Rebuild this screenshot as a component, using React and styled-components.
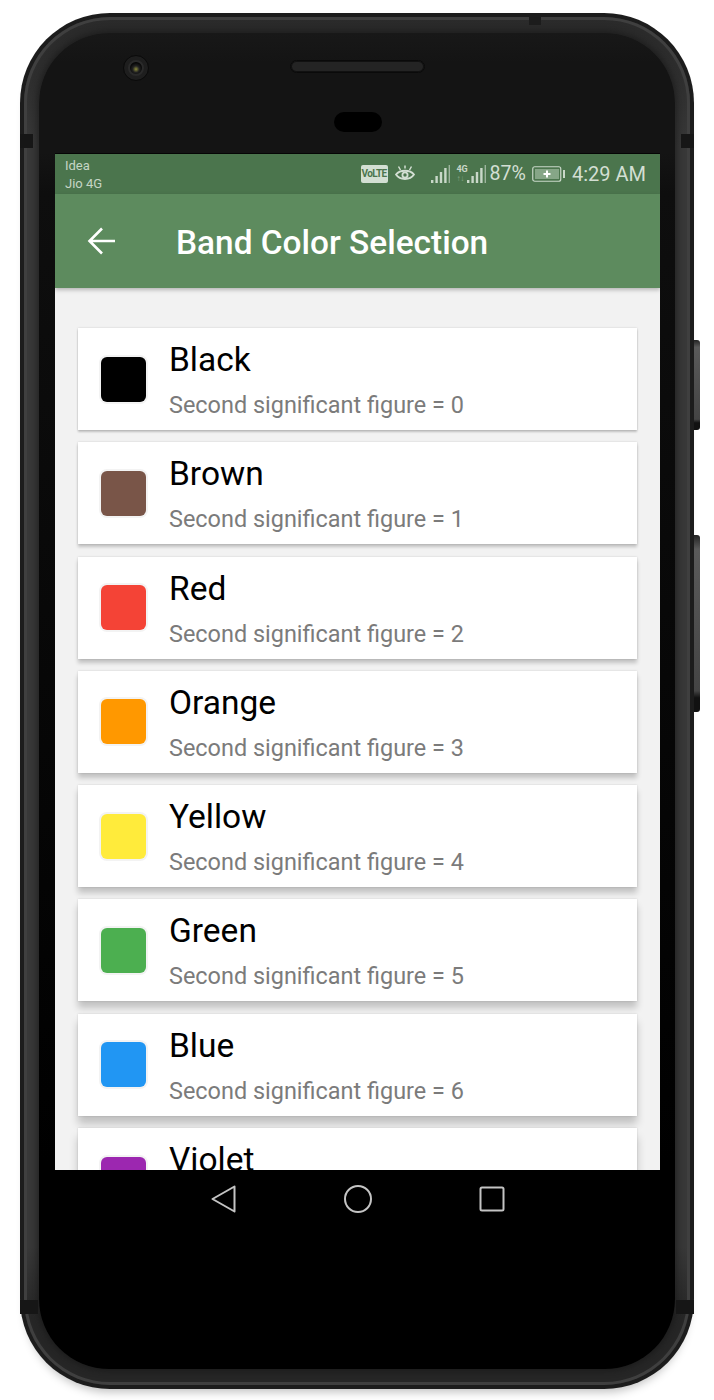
import React from 'react'
import styled, { createGlobalStyle } from 'styled-components';

const bands = [
    { name: 'Black', color: '#000000' },
    { name: 'Brown', color: '#795548' },
    { name: 'Red', color: '#f44336' },
    { name: 'Orange', color: '#ff9800' },
    { name: 'Yellow', color: '#ffeb3b' },
    { name: 'Green', color: '#4caf50' },
    { name: 'Blue', color: '#2196f3' },
    { name: 'Violet', color: '#9c27b0' },
];

function SignalBars({ width = 20 }) {
    return (
        <svg width={width} height="18" viewBox="0 0 20 18">
            <rect x="0" y="15" width="2.4" height="3" fill="#c9d8c9" />
            <rect x="4.4" y="11" width="2.4" height="7" fill="#c9d8c9" />
            <rect x="8.8" y="7" width="2.4" height="11" fill="#c9d8c9" />
            <rect x="13.2" y="3" width="2.4" height="15" fill="#c9d8c9" />
            <rect x="17.6" y="0" width="1.4" height="18" fill="#9db59e" />
        </svg>
    );
}

function EyeIcon() {
    return (
        <svg width="20" height="18" viewBox="0 0 20 18" fill="none" stroke="#d3dfd3" strokeWidth="1.8">
            <path d="M1 9.5 C5 4.5 15 4.5 19 9.5 C15 15.5 5 15.5 1 9.5 Z" />
            <circle cx="10" cy="10" r="2.6" />
            <path d="M3.5 1.5 L5.5 5 M16.5 1.5 L14.5 5 M10 0.5 V3.5" strokeWidth="1.5" />
        </svg>
    );
}

function BatteryIcon() {
    return (
        <svg width="33" height="18" viewBox="0 0 33 18" fill="none">
            <rect x="0.75" y="1.75" width="28" height="14.5" rx="2" stroke="#c9d8c9" strokeWidth="1.2" />
            <rect x="3" y="4" width="24" height="10" fill="#86a687" />
            <path d="M15 5.5 V12.5 M11.5 9 H18.5" stroke="#ffffff" strokeWidth="2" />
            <rect x="31" y="5" width="2" height="8" fill="#c9d8c9" />
        </svg>
    );
}

function ArrowIcon() {
    return (
        <svg width="30" height="28" viewBox="0 0 30 28" fill="none" stroke="#ffffff" strokeWidth="2.6">
            <path d="M28 14 H3 M15 1.5 L2.5 14 L15 26.5" />
        </svg>
    );
}

function BackIcon() {
    return (
        <svg width="25" height="28" viewBox="0 0 25 28" fill="none" stroke="#c4c4c4" strokeWidth="2" strokeLinejoin="round">
            <path d="M23.5 1.5 L1.5 14 L23.5 26.5 Z" />
        </svg>
    );
}

function HomeIcon() {
    return (
        <svg width="28" height="28" viewBox="0 0 28 28" fill="none" stroke="#c4c4c4" strokeWidth="2">
            <circle cx="14" cy="14" r="13" />
        </svg>
    );
}

function RecentIcon() {
    return (
        <svg width="26" height="26" viewBox="0 0 26 26" fill="none" stroke="#c4c4c4" strokeWidth="2">
            <rect x="1.5" y="1.5" width="23" height="23" rx="1.5" />
        </svg>
    );
}

export default function App() {
    return (
        <Page>
            <GlobalStyle />
            <Phone>
                <Rim>
                    <Bezel>
                        <EarRow>
                            <CameraSlot>
                                <Camera>
                                    <Lens />
                                </Camera>
                            </CameraSlot>
                            <Speaker />
                        </EarRow>
                        <Sensor />
                        <Screen>
                            <StatusBar>
                                <Carriers>
                                    <span>Idea</span>
                                    <span>Jio 4G</span>
                                </Carriers>
                                <StatusIcons>
                                    <Volte>VoLTE</Volte>
                                    <EyeIcon />
                                    <SignalGroup>
                                        <SignalBars />
                                    </SignalGroup>
                                    <NetworkGroup>
                                        <NetworkLabel>
                                            4G
                                            <NetworkArrows>↑↓</NetworkArrows>
                                        </NetworkLabel>
                                        <SignalBars />
                                    </NetworkGroup>
                                    <Percent>87%</Percent>
                                    <BatteryIcon />
                                    <Clock>4:29 AM</Clock>
                                </StatusIcons>
                            </StatusBar>
                            <AppBar>
                                <BackArrow>
                                    <ArrowIcon />
                                </BackArrow>
                                <Title>Band Color Selection</Title>
                            </AppBar>
                            <List>
                                {bands.map((band, i) => (
                                    <Card key={band.name} $depth={i}>
                                        <Swatch $color={band.color} />
                                        <CardText>
                                            <BandName>{band.name}</BandName>
                                            <BandValue>Second significant figure = {i}</BandValue>
                                        </CardText>
                                    </Card>
                                ))}
                            </List>
                        </Screen>
                        <NavBar>
                            <NavSlot><BackIcon /></NavSlot>
                            <NavSlot><HomeIcon /></NavSlot>
                            <NavSlot><RecentIcon /></NavSlot>
                        </NavBar>
                    </Bezel>
                </Rim>
                <TopBand />
                <SideBand $side="left" $top={121} $width={13} />
                <SideBand $side="right" $top={121} $width={13} />
                <SideBand $side="left" $top={1287} $width={18} />
                <SideBand $side="right" $top={1287} $width={18} />
                <SideButton $top={327} $height={90} />
                <SideButton $top={522} $height={177} />
            </Phone>
        </Page>
    );
}

const GlobalStyle = createGlobalStyle`
    html, body {
        margin: 0;
        padding: 0;
        background: #fff;
    }
    body {
        font-family: Roboto, "Liberation Sans", sans-serif;
    }
`;

const Page = styled.div`
    width: 714px;
    height: 1400px;
    box-sizing: border-box;
    padding: 13px 20px 11px;
    overflow: hidden;
`;

const Phone = styled.div`
    position: relative;
    height: 1376px;
    box-sizing: border-box;
    padding: 4px;
    border-radius: 90px;
    background: #1c1c1c;
    box-shadow: 0 9px 10px -6px rgba(0, 0, 0, 0.25);
`;

const TopBand = styled.div`
    position: absolute;
    top: 0;
    left: 509px;
    width: 12px;
    height: 12px;
    background: #1c1c1c;
`;

const SideBand = styled.div`
    position: absolute;
    top: ${p => p.$top}px;
    ${p => p.$side}: 0;
    width: ${p => p.$width}px;
    height: 14px;
    background: #161616;
`;

const SideButton = styled.div`
    position: absolute;
    top: ${p => p.$top}px;
    right: -6px;
    width: 6px;
    height: ${p => p.$height}px;
    border-radius: 0 3px 3px 0;
    background: linear-gradient(180deg, #222 0, #5a5a5a 8%, #444 88%, #111 92%, #111 100%);
`;

const Rim = styled.div`
    height: 100%;
    box-sizing: border-box;
    padding: 16px 15px;
    border-radius: 86px;
    background: linear-gradient(180deg, #2a2a2a 0, #2e2e2e 60px, #383838 130px, #383838 1230px, #262626 1300px);
    box-shadow: inset 0 0 0 3px #3f3f3f;
`;

const Bezel = styled.div`
    height: 100%;
    box-sizing: border-box;
    padding: 0 15px 0 16px;
    border-radius: 70px;
    background: linear-gradient(180deg, #181818 0, #141414 30px, #141414 120px, #0e0e0e 160px, #000 1130px);
    box-shadow: 0 0 6px 2px rgba(20, 20, 20, 0.6);
    display: flex;
    flex-direction: column;
    overflow: hidden;
`;

const EarRow = styled.div`
    display: grid;
    grid-template-columns: 1fr 135px 1fr;
    align-items: center;
    height: 24px;
    margin-top: 19px;
`;

const CameraSlot = styled.div`
    padding: 3px 0 0 68px;
`;

const Camera = styled.div`
    width: 26px;
    height: 26px;
    border-radius: 50%;
    background: #1e1e1e;
    border: 1px solid #0a0a0a;
    box-sizing: border-box;
    display: flex;
    align-items: center;
    justify-content: center;
`;

const Lens = styled.div`
    width: 12px;
    height: 12px;
    border-radius: 50%;
    background: radial-gradient(circle at 50% 60%, #8a8a3a 0, #222 35%, #050505 70%);
    border: 2px solid #2a2a2a;
`;

const Speaker = styled.div`
    height: 13px;
    border-radius: 7px;
    background: #242424;
    border: 1px solid #0a0a0a;
    box-sizing: border-box;
    box-shadow: inset 0 0 0 1px #111;
`;

const Sensor = styled.div`
    align-self: center;
    flex: none;
    width: 48px;
    height: 20px;
    margin-top: 36px;
    border-radius: 10px;
    background: #000;
`;

const Screen = styled.div`
    flex: none;
    height: 1017px;
    margin-top: 21px;
    overflow: hidden;
    background: #f2f2f2;
    border-top: 1px solid #050505;
    box-sizing: border-box;
    display: flex;
    flex-direction: column;
`;

const StatusBar = styled.div`
    flex: none;
    height: 40px;
    padding: 0 14px 0 10px;
    background: #4b754d;
    display: flex;
    align-items: center;
    justify-content: space-between;
`;

const Carriers = styled.div`
    display: flex;
    flex-direction: column;
    gap: 5px;
    font-size: 13px;
    line-height: 13px;
    color: #c6d5c6;
`;

const StatusIcons = styled.div`
    display: flex;
    align-items: center;
    color: #d3dfd3;
`;

const Volte = styled.div`
    width: 27px;
    height: 18px;
    margin-right: 7px;
    border-radius: 2px;
    background: #d3dfd3;
    color: #4b754d;
    font-size: 10px;
    font-weight: 700;
    line-height: 18px;
    text-align: center;
    letter-spacing: -0.6px;
`;

const SignalGroup = styled.div`
    margin-left: 16px;
    display: flex;
`;

const NetworkGroup = styled.div`
    display: flex;
    align-items: flex-start;
    margin-left: 6px;
`;

const NetworkLabel = styled.span`
    display: flex;
    flex-direction: column;
    width: 10px;
    font-size: 9px;
    font-weight: 700;
    line-height: 9px;
    letter-spacing: -0.3px;
    color: #c9d8c9;
`;

const NetworkArrows = styled.span`
    font-size: 8px;
    color: #86a687;
`;

const Percent = styled.span`
    margin: 0 6px 0 3px;
    font-size: 19.6px;
    line-height: 22px;
`;

const Clock = styled.span`
    margin-left: 7px;
    font-size: 20px;
    line-height: 22px;
`;

const AppBar = styled.div`
    flex: none;
    height: 94px;
    background: #5d8b5e;
    box-shadow: 0 2px 4px rgba(0, 0, 0, 0.25);
    display: flex;
    align-items: center;
    position: relative;
    z-index: 1;
`;

const BackArrow = styled.div`
    width: 121px;
    padding-left: 32px;
    box-sizing: border-box;
    display: flex;
`;

const Title = styled.h1`
    margin: 3px 0 0;
    font-size: 33.4px;
    font-weight: 500;
    color: #fff;
    line-height: 38px;
`;

const List = styled.div`
    padding: 40px 23px 0;
    display: flex;
    flex-direction: column;
    gap: 12.3px;
`;

const Card = styled.div`
    flex: none;
    height: 102px;
    background: #fff;
    box-shadow:
        0 0 2px rgba(0, 0, 0, 0.15),
        0 ${p => 2 + p.$depth}px ${p => 2 + p.$depth}px rgba(0, 0, 0, 0.2);
    display: flex;
    align-items: center;
    padding-left: 23px;
`;

const Swatch = styled.div`
    width: 45px;
    height: 45px;
    flex: none;
    border-radius: 6px;
    background: ${p => p.$color};
    box-shadow: 0 0 0 2px #f3f3f3;
`;

const CardText = styled.div`
    margin-left: 23px;
    align-self: flex-start;
    display: flex;
    flex-direction: column;
`;

const BandName = styled.div`
    margin-top: 13px;
    font-size: 33.5px;
    line-height: 38px;
    color: #000;
`;

const BandValue = styled.div`
    margin-top: 13px;
    font-size: 23.45px;
    line-height: 27px;
    color: #7b7b7b;
`;

const NavBar = styled.div`
    display: flex;
    justify-content: center;
    align-items: center;
    height: 58px;
`;

const NavSlot = styled.div`
    width: 134px;
    display: flex;
    justify-content: center;
`;
